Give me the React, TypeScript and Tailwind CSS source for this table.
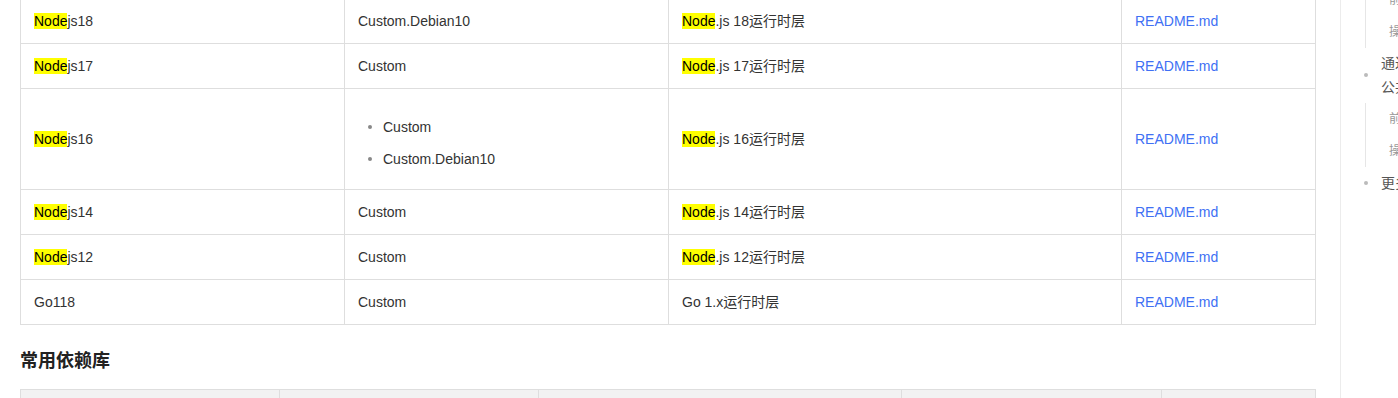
import React from "react";

type Row = {
  name: string;
  hl: boolean;
  types: string[];
  desc: string;
  descHl: boolean;
};

const rows: Row[] = [
  { name: "js18", hl: true, types: ["Custom.Debian10"], desc: ".js 18运行时层", descHl: true },
  { name: "js17", hl: true, types: ["Custom"], desc: ".js 17运行时层", descHl: true },
  { name: "js16", hl: true, types: ["Custom", "Custom.Debian10"], desc: ".js 16运行时层", descHl: true },
  { name: "js14", hl: true, types: ["Custom"], desc: ".js 14运行时层", descHl: true },
  { name: "js12", hl: true, types: ["Custom"], desc: ".js 12运行时层", descHl: true },
  { name: "Go118", hl: false, types: ["Custom"], desc: "Go 1.x运行时层", descHl: false },
];

function Hl() {
  return <span className="bg-[#ffff00] text-black">Node</span>;
}

function Cell({ children }: { children: React.ReactNode }) {
  return (
    <td className="border border-[#dedede] px-[13px] py-[11px] align-middle leading-[22px]">
      {children}
    </td>
  );
}

function Sidebar() {
  return (
    <div className="w-[200px] shrink-0 border-l border-[#ececec] pl-[24px]">
      <div className="-mt-[16px]">
        <ul className="border-l border-[#e6e6e6] pl-[23px] text-[12px] text-[#999]">
          <li className="h-[32px] leading-[32px] whitespace-nowrap">前提条件</li>
          <li className="h-[32px] leading-[32px] whitespace-nowrap">操作步骤</li>
        </ul>
        <div className="mt-[3px] mb-[4px] flex items-center text-[14px] leading-[24px] text-[#555]">
          <span className="-ml-[1px] mr-[13px] h-[4px] w-[4px] rounded-full bg-[#bbb]" />
          <div className="whitespace-nowrap">
            <div>通过控制台使用</div>
            <div>公共层</div>
          </div>
        </div>
        <ul className="border-l border-[#e6e6e6] pl-[23px] text-[12px] text-[#999]">
          <li className="h-[32px] leading-[32px] whitespace-nowrap">前提条件</li>
          <li className="h-[32px] leading-[32px] whitespace-nowrap">操作步骤</li>
        </ul>
        <div className="mt-[4px] flex items-center text-[14px] leading-[24px] text-[#555]">
          <span className="-ml-[1px] mr-[13px] h-[4px] w-[4px] rounded-full bg-[#bbb]" />
          <div className="whitespace-nowrap">更多信息</div>
        </div>
      </div>
    </div>
  );
}

export default function App() {
  return (
    <div className="flex h-[398px] w-[1398px] overflow-hidden bg-white font-['Liberation_Sans','Noto_Sans_CJK_SC',sans-serif] text-[14px] text-[#333]">
      <div className="w-[1340px] shrink-0 pl-[20px]">
        <table className="-mt-[2px] w-[1295px] table-fixed border-collapse">
          <colgroup>
            <col className="w-[324px]" />
            <col className="w-[324px]" />
            <col className="w-[453px]" />
            <col className="w-[194px]" />
          </colgroup>
          <tbody>
            {rows.map((r) => (
              <tr key={r.name}>
                <Cell>
                  {r.hl ? (
                    <>
                      <Hl />
                      {r.name}
                    </>
                  ) : (
                    r.name
                  )}
                </Cell>
                {r.types.length > 1 ? (
                  <td className="border border-[#dedede] px-[13px] py-[11px] align-middle leading-[22px]">
                    <ul className="mt-[16px] mb-[8px] flex flex-col gap-[10px]">
                      {r.types.map((t) => (
                        <li key={t} className="flex items-center">
                          <span className="ml-[10px] mr-[11px] h-[4px] w-[4px] rounded-full bg-[#888]" />
                          {t}
                        </li>
                      ))}
                    </ul>
                  </td>
                ) : (
                  <Cell>{r.types[0]}</Cell>
                )}
                <Cell>
                  {r.descHl && <Hl />}
                  {r.desc}
                </Cell>
                <Cell>
                  <a className="text-[#4070f4]">README.md</a>
                </Cell>
              </tr>
            ))}
          </tbody>
        </table>

        <h3 className="mt-[23px] mb-[15px] text-[18px] font-bold leading-[26px] text-[#222]">
          常用依赖库
        </h3>

        <table className="w-[1295px] table-fixed border-collapse">
          <colgroup>
            <col className="w-[259px]" />
            <col className="w-[259px]" />
            <col className="w-[363px]" />
            <col className="w-[260px]" />
            <col className="w-[154px]" />
          </colgroup>
          <thead>
            <tr className="bg-[#f2f2f2]">
              <th className="h-[45px] border border-[#dedede]" />
              <th className="h-[45px] border border-[#dedede]" />
              <th className="h-[45px] border border-[#dedede]" />
              <th className="h-[45px] border border-[#dedede]" />
              <th className="h-[45px] border border-[#dedede]" />
            </tr>
          </thead>
        </table>
      </div>
      <Sidebar />
    </div>
  );
}
